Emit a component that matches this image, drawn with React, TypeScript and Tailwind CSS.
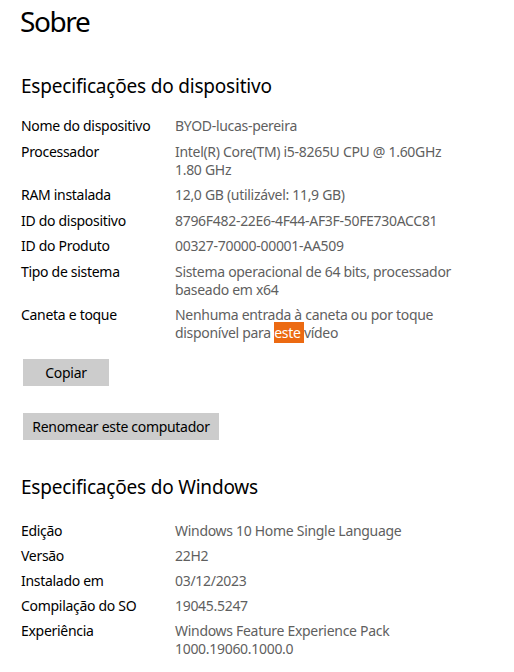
import React from "react";

const font = { fontFamily: '"Noto Sans", "Open Sans", sans-serif' };

function Row({ label, children, tight }: { label: string; children: React.ReactNode; tight?: boolean }) {
  return (
    <div className={"flex leading-[18px] tracking-[-0.3px] " + (tight ? "mb-[7px]" : "mb-[7.5px]")}>
      <div className="w-[154px] shrink-0 text-black">{label}</div>
      <div className="text-[#5f5f5f]">{children}</div>
    </div>
  );
}

export default function App() {
  return (
    <div className="w-[514px] h-[672px] bg-white pl-[21px] text-[14px] overflow-hidden" style={font}>
      <h1 className="text-[28px] leading-[36px] pt-[3px] -ml-[1px] text-black tracking-[-1.4px]">Sobre</h1>
      <h2 className="text-[19px] leading-[28px] mt-[33px] mb-[17px] text-black tracking-[-0.2px]">Especificações do dispositivo</h2>
      <Row label="Nome do dispositivo">BYOD-lucas-pereira</Row>
      <Row label="Processador">
        <span className="block">Intel(R) Core(TM) i5-8265U CPU @ 1.60GHz</span>
        <span className="block">1.80 GHz</span>
      </Row>
      <Row label="RAM instalada">12,0 GB (utilizável: 11,9 GB)</Row>
      <Row label="ID do dispositivo">8796F482-22E6-4F44-AF3F-50FE730ACC81</Row>
      <Row label="ID do Produto">00327-70000-00001-AA509</Row>
      <Row label="Tipo de sistema">
        <span className="block">Sistema operacional de 64 bits, processador</span>
        <span className="block">baseado em x64</span>
      </Row>
      <Row label="Caneta e toque">
        <span className="block">Nenhuma entrada à caneta ou por toque</span>
        <span className="block">
          disponível para <span className="bg-[#ec6a12] text-white py-[1px]">este </span>vídeo
        </span>
      </Row>
      <div className="mt-[17px] flex flex-col items-start gap-[27px] pl-[2px] tracking-[-0.3px]">
        <button className="h-[27px] w-[86px] bg-[#cccccc] text-black text-[14px]">Copiar</button>
        <button className="h-[27px] w-[196px] bg-[#cccccc] text-black text-[14px]">Renomear este computador</button>
      </div>
      <h2 className="text-[19px] leading-[28px] mt-[33px] mb-[21px] text-black tracking-[-0.2px]">Especificações do Windows</h2>
      <Row tight label="Edição">Windows 10 Home Single Language</Row>
      <Row tight label="Versão">22H2</Row>
      <Row tight label="Instalado em">03/12/2023</Row>
      <Row tight label="Compilação do SO">19045.5247</Row>
      <Row tight label="Experiência">
        <span className="block">Windows Feature Experience Pack</span>
        <span className="block">1000.19060.1000.0</span>
      </Row>
    </div>
  );
}
